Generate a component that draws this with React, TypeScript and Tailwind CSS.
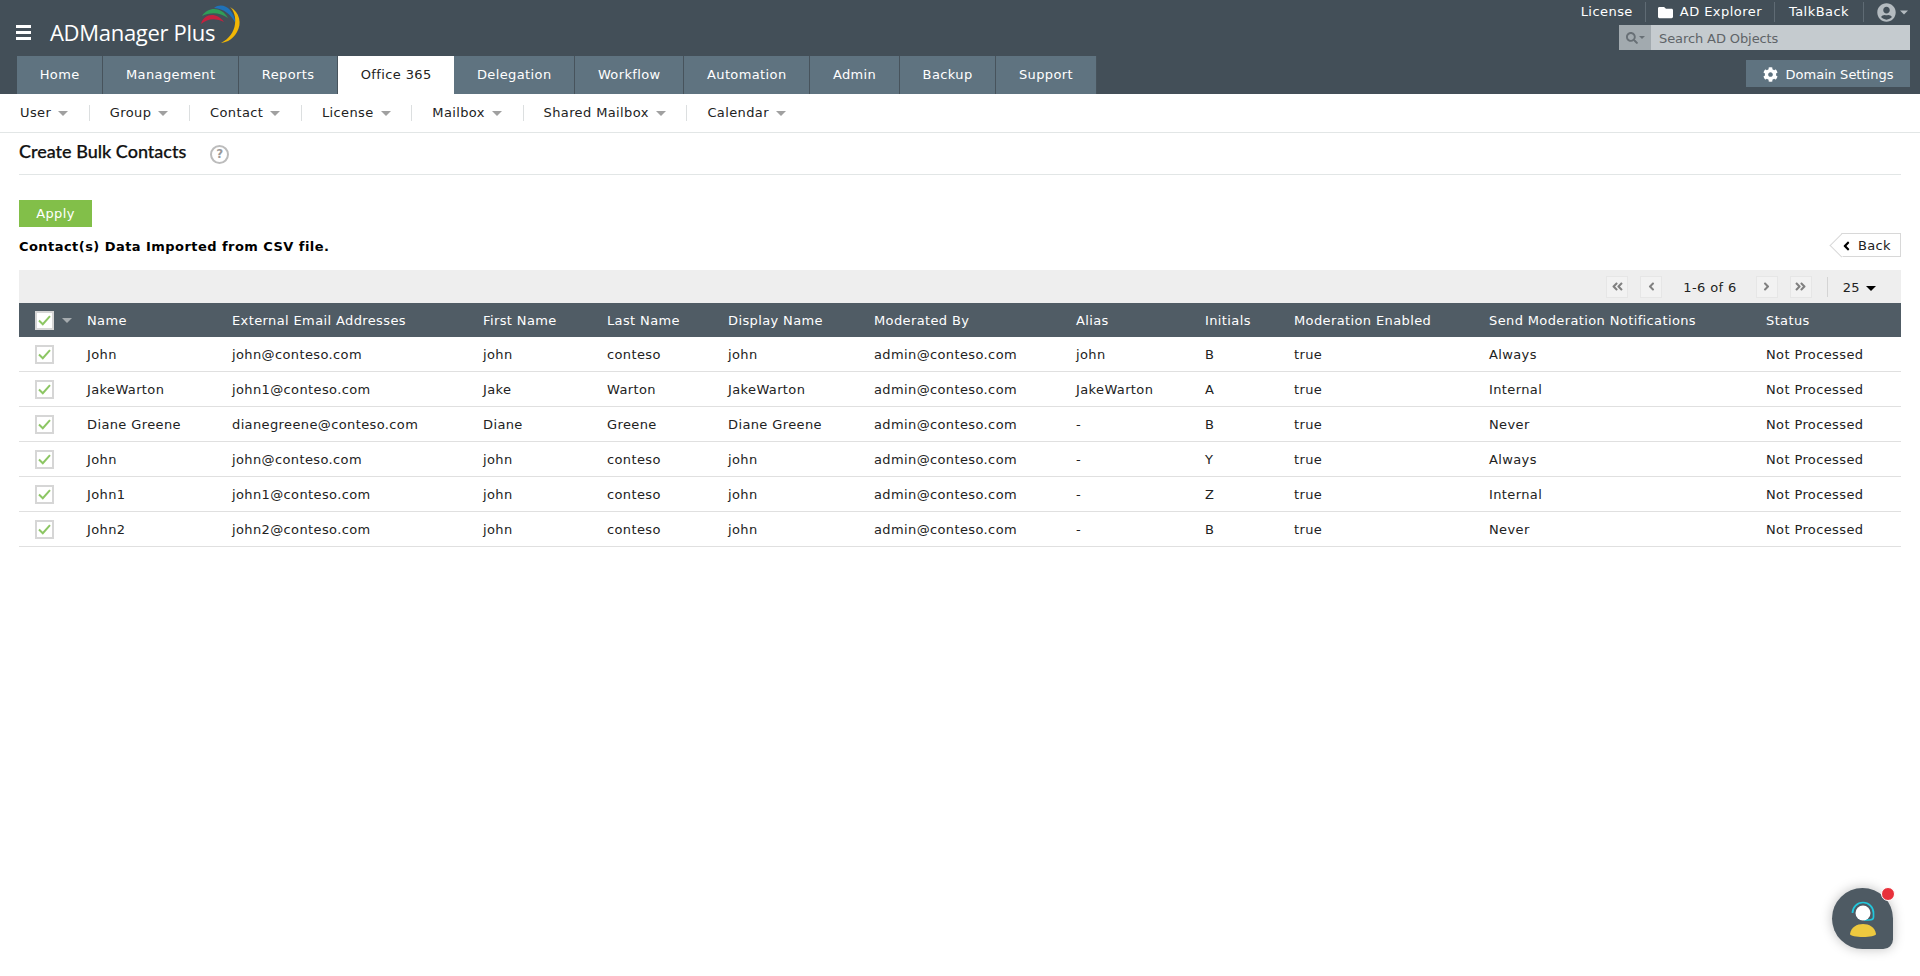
import {
  FaAngleDoubleLeft,
  FaAngleDoubleRight,
  FaAngleLeft,
  FaAngleRight,
  FaCog,
  FaFolder,
  FaSearch,
  FaUserCircle,
} from "react-icons/fa";

const tabs = ["Home", "Management", "Reports", "Office 365", "Delegation", "Workflow", "Automation", "Admin", "Backup", "Support"];
const subMenus = ["User", "Group", "Contact", "License", "Mailbox", "Shared Mailbox", "Calendar"];

const columns = [
  { label: "Name", width: "w-[145px]" },
  { label: "External Email Addresses", width: "w-[251px]" },
  { label: "First Name", width: "w-[124px]" },
  { label: "Last Name", width: "w-[121px]" },
  { label: "Display Name", width: "w-[146px]" },
  { label: "Moderated By", width: "w-[202px]" },
  { label: "Alias", width: "w-[129px]" },
  { label: "Initials", width: "w-[89px]" },
  { label: "Moderation Enabled", width: "w-[195px]" },
  { label: "Send Moderation Notifications", width: "w-[277px]" },
  { label: "Status", width: "w-[135px]" },
];

const rows = [
  ["John", "john@conteso.com", "john", "conteso", "john", "admin@conteso.com", "john", "B", "true", "Always", "Not Processed"],
  ["JakeWarton", "john1@conteso.com", "Jake", "Warton", "JakeWarton", "admin@conteso.com", "JakeWarton", "A", "true", "Internal", "Not Processed"],
  ["Diane Greene", "dianegreene@conteso.com", "Diane", "Greene", "Diane Greene", "admin@conteso.com", "-", "B", "true", "Never", "Not Processed"],
  ["John", "john@conteso.com", "john", "conteso", "john", "admin@conteso.com", "-", "Y", "true", "Always", "Not Processed"],
  ["John1", "john1@conteso.com", "john", "conteso", "john", "admin@conteso.com", "-", "Z", "true", "Internal", "Not Processed"],
  ["John2", "john2@conteso.com", "john", "conteso", "john", "admin@conteso.com", "-", "B", "true", "Never", "Not Processed"],
];

function Caret({ className = "" }: { className?: string }) {
  return (
    <svg width="10" height="5" viewBox="0 0 10 5" className={`shrink-0 fill-current ${className}`} aria-hidden>
      <path d="M0 0 H10 L5 5 Z" />
    </svg>
  );
}

function Check() {
  return (
    <span className="flex size-[19px] items-center justify-center border-2 border-[#d6d6d6] bg-white">
      <svg width="13" height="11" viewBox="0 0 13 11" fill="none" aria-hidden>
        <path d="M1 5.5 L4.8 9.2 L12 1.2" stroke="#8cc663" strokeWidth="2" />
      </svg>
    </span>
  );
}

function PageButton({ children }: { children: React.ReactNode }) {
  return (
    <span className="flex h-[22px] w-[22px] items-center justify-center border border-[#e6e6e6] bg-[#f2f2f2] text-[#808080]">
      {children}
    </span>
  );
}

function Logo() {
  return (
    <svg width="60" height="60" viewBox="0 0 60 60" aria-hidden>
      <path d="M24 8 C32 2 43 7 46 24 C41 14 34 9 24 8 Z" fill="#1f72b8" />
      <path d="M12 16 C18 7 31 6 38 18 C30 12 20 12 12 16 Z" fill="#2f9e58" />
      <path d="M11 24 C14 13 27 12 34 22 C26 18 18 18 11 24 Z" fill="#c4213f" />
      <path d="M40 7 C50 12 52 24 47 32 C43 39 38 42 31 43 C39 39 44 32 45 24 C46 17 44 11 40 7 Z" fill="#f2b705" />
    </svg>
  );
}

export default function App() {
  return (
    <div className="min-h-[976px] bg-white font-['DejaVu_Sans',sans-serif] text-[13px] tracking-[0.38px] text-[#222]">
      <header className="relative h-[94px] bg-[#434f58] text-white">
        <div className="flex h-[56px] items-start pl-[16px]">
          <div className="mt-[25px] flex w-[15px] flex-col gap-[3px]">
            <span className="h-[3px] bg-white" />
            <span className="h-[3px] bg-white" />
            <span className="h-[3px] bg-white" />
          </div>
          <div className="relative ml-[11px] mt-[19px] whitespace-nowrap pl-[8px] font-['Open_Sans',sans-serif] text-[22px] leading-[26px] tracking-[-0.3px]">
            ADManager Plus
            <span className="absolute -top-[19px] left-[148px]">
              <Logo />
            </span>
          </div>
          <div className="ml-auto flex h-[24px] items-center whitespace-nowrap pr-[12px] text-[13px] tracking-[0.45px]">
            <span className="border-r border-[#5f6b74] pr-[12px]">License</span>
            <span className="flex items-center gap-[7px] border-r border-[#5f6b74] px-[12px]">
              <FaFolder className="size-[15px]" aria-hidden />
              AD Explorer
            </span>
            <span className="border-r border-[#5f6b74] px-[14px]">TalkBack</span>
            <span className="flex items-center gap-[4px] pl-[13px] text-[#b4bbc0]">
              <FaUserCircle className="size-[19px]" aria-hidden />
              <Caret className="w-[8px]" />
            </span>
          </div>
        </div>

        <div className="absolute right-[10px] top-[25px] flex h-[25px] w-[291px] bg-[#c5cbcf] tracking-[-0.1px] text-[#5f6468]">
          <span className="flex w-[32px] items-center justify-center gap-[1px] bg-[#a2aaaf] text-[#687076]">
            <FaSearch className="size-[12px]" aria-hidden />
            <Caret className="w-[6px]" />
          </span>
          <span className="flex items-center pl-[8px] pt-[2px]">Search AD Objects</span>
        </div>

        <div className="flex h-[38px] pl-[17px] pr-[10px]">
          <nav className="flex">
            {tabs.map((tab) => (
              <a
                key={tab}
                className={
                  tab === "Office 365"
                    ? "flex items-center bg-white px-[22.7px] text-[#222]"
                    : "flex items-center border-r border-[#47535c] bg-[#5f7380] px-[22.7px] text-white"
                }
              >
                {tab}
              </a>
            ))}
          </nav>
          <div className="ml-auto mt-[4px] flex h-[27px] w-[164px] items-center justify-center gap-[8px] bg-[#5f7380] pt-[2px] tracking-normal">
            <FaCog className="size-[15px]" aria-hidden />
            Domain Settings
          </div>
        </div>
      </header>

      <div className="flex h-[39px] items-center border-b border-[#e2e6e6] pl-[20px]">
        {subMenus.map((menu, index) => (
          <div key={menu} className="flex items-center">
            {index > 0 ? <span className="ml-[20.7px] mr-[20px] h-[16px] w-px bg-[#dcdfe0]" /> : null}
            <span>{menu}</span>
            <Caret className="ml-[7px] text-[#a0a0a0]" />
          </div>
        ))}
      </div>

      <main className="px-[19px]">
        <div className="flex h-[42px] items-center gap-[24px] border-b border-[#e2e6e6] pb-[5px]">
          <h1 className="font-['Lato',sans-serif] text-[18px] font-medium tracking-normal text-[#111] [-webkit-text-stroke:0.25px_#111]">Create Bulk Contacts</h1>
          <span className="mt-[6px] flex size-[19px] items-center justify-center rounded-full border-2 border-[#bcbcbc] text-[12px] font-bold tracking-normal text-[#999]">?</span>
        </div>

        <button type="button" className="mt-[25px] block h-[27px] w-[73px] bg-[#82bf49] text-white">
          Apply
        </button>

        <div className="flex h-[43px] justify-between">
          <p className="mt-[10px] font-bold tracking-[0.45px] text-black">Contact(s) Data Imported from CSV file.</p>
          <span className="relative ml-auto mt-[6px] flex h-[24px] w-[60px] items-center justify-end gap-[6px] border border-l-0 border-[#d8d8d8] bg-white pr-[9px] pt-px">
            <span className="absolute -left-[8px] top-[3px] size-[17px] rotate-45 border-b border-l border-[#d8d8d8] bg-white" />
            <FaAngleLeft className="relative size-[14px] text-black" aria-hidden />
            <span className="relative">Back</span>
          </span>
        </div>

        <div className="flex h-[33px] items-center justify-end bg-[#eeeeee] pr-[25px]">
          <PageButton><FaAngleDoubleLeft className="size-[13px]" aria-hidden /></PageButton>
          <span className="w-[12px]" />
          <PageButton><FaAngleLeft className="size-[13px]" aria-hidden /></PageButton>
          <span className="ml-[21px] mr-[19px] pt-[3px]">1-6 of 6</span>
          <PageButton><FaAngleRight className="size-[13px]" aria-hidden /></PageButton>
          <span className="w-[12px]" />
          <PageButton><FaAngleDoubleRight className="size-[13px]" aria-hidden /></PageButton>
          <span className="ml-[15px] h-[20px] w-px bg-[#d4d4d4]" />
          <span className="ml-[15px] flex items-center gap-[6px] pt-[3px]">
            25
            <Caret className="text-black" />
          </span>
        </div>

        <table className="w-full table-fixed border-separate border-spacing-0">
          <thead>
            <tr className="h-[34px] bg-[#505c65] text-left text-white">
              <th className="w-[68px] pl-[16px] font-normal">
                <span className="flex items-center gap-[8px]">
                  <Check />
                  <Caret className="text-[#a5abaf]" />
                </span>
              </th>
              {columns.map((column) => (
                <th key={column.label} className={`${column.width} pt-px font-normal`}>{column.label}</th>
              ))}
            </tr>
          </thead>
          <tbody>
            {rows.map((row, rowIndex) => (
              <tr key={rowIndex} className="h-[35px]">
                <td className="border-b border-[#e0e0e0] pl-[16px]"><Check /></td>
                {row.map((cell, cellIndex) => (
                  <td key={cellIndex} className="whitespace-nowrap border-b border-[#e0e0e0] pt-px">{cell}</td>
                ))}
              </tr>
            ))}
          </tbody>
        </table>
      </main>

      <div className="fixed bottom-[27px] right-[27px] flex size-[61px] items-center justify-center rounded-[50%_50%_16%_50%] bg-[#4e5a63] shadow-[0_0_12px_rgba(0,0,0,0.25)]">
        <svg width="30" height="38" viewBox="0 0 30 38" fill="none" aria-hidden>
          <path d="M4.5 13 A10.5 10.5 0 1 1 25.5 13 V17 Q25.5 20 21 20 H16" stroke="#22c7dc" strokeWidth="1.7" />
          <circle cx="15" cy="13" r="7.5" fill="#fff" />
          <path d="M2 34 C3 27 9 24 15 24 C21 24 27 27 28 34 C28 38 2 38 2 34 Z" fill="#eec93f" />
        </svg>
        <span className="absolute -right-[2px] -top-[1px] size-[14px] rounded-full border border-white bg-[#e8303a]" />
      </div>
    </div>
  );
}
